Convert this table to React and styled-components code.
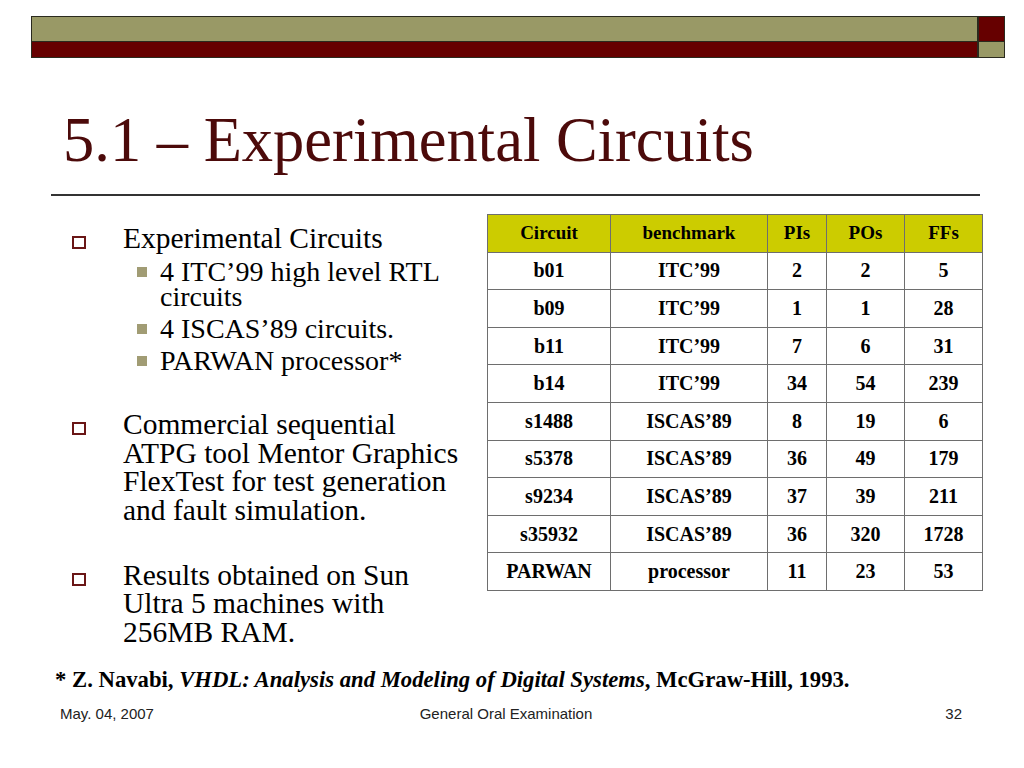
import React from "react";
import styled, { createGlobalStyle } from "styled-components";

const GlobalStyle = createGlobalStyle`
  html, body {
    margin: 0;
    padding: 0;
    background: #ffffff;
  }
`;

const colors = {
  olive: "#999966",
  maroon: "#660000",
  title: "#4c0a0a",
  edge: "#2a2a1e",
  header: "#cccc00",
  grid: "#6e6e6e"
};

const serif = `"Liberation Serif", "Times New Roman", serif`;
const sans = `"Liberation Sans", Arial, sans-serif`;

const circuits = [
  ["b01", "ITC’99", "2", "2", "5"],
  ["b09", "ITC’99", "1", "1", "28"],
  ["b11", "ITC’99", "7", "6", "31"],
  ["b14", "ITC’99", "34", "54", "239"],
  ["s1488", "ISCAS’89", "8", "19", "6"],
  ["s5378", "ISCAS’89", "36", "49", "179"],
  ["s9234", "ISCAS’89", "37", "39", "211"],
  ["s35932", "ISCAS’89", "36", "320", "1728"],
  ["PARWAN", "processor", "11", "23", "53"]
];

const App = () => (
  <>
    <GlobalStyle />
    <Slide>
      <Banner>
        <BannerBar>
          <Strip tone={colors.olive} h={26} />
          <Strip tone={colors.maroon} h={16} />
        </BannerBar>
        <BannerCap>
          <Strip tone={colors.maroon} h={26} />
          <Strip tone={colors.olive} h={16} />
        </BannerCap>
      </Banner>

      <Title>5.1 – Experimental Circuits</Title>
      <Rule />

      <Body>
        <Points>
          <Point>
            <HollowBullet />
            <div>
              Experimental Circuits
              <SubPoints>
                <SubPoint>
                  <FilledBullet />
                  <span>4 ITC’99 high level RTL circuits</span>
                </SubPoint>
                <SubPoint>
                  <FilledBullet />
                  <span>4 ISCAS’89 circuits.</span>
                </SubPoint>
                <SubPoint>
                  <FilledBullet />
                  <span>PARWAN processor*</span>
                </SubPoint>
              </SubPoints>
            </div>
          </Point>
          <Point spaced>
            <HollowBullet />
            <span>
              Commercial sequential ATPG tool Mentor Graphics FlexTest for
              test generation and fault simulation.
            </span>
          </Point>
          <Point spaced>
            <HollowBullet />
            <span>Results obtained on Sun Ultra 5 machines with 256MB RAM.</span>
          </Point>
        </Points>

        <Table>
          <colgroup>
            <col style={{ width: 123 }} />
            <col style={{ width: 157 }} />
            <col style={{ width: 59 }} />
            <col style={{ width: 78 }} />
            <col style={{ width: 78 }} />
          </colgroup>
          <thead>
            <tr>
              <HeadCell>Circuit</HeadCell>
              <HeadCell>benchmark</HeadCell>
              <HeadCell>PIs</HeadCell>
              <HeadCell>POs</HeadCell>
              <HeadCell>FFs</HeadCell>
            </tr>
          </thead>
          <tbody>
            {circuits.map(row => (
              <tr key={row[0]}>
                {row.map((value, i) => (
                  <Cell key={i}>{value}</Cell>
                ))}
              </tr>
            ))}
          </tbody>
        </Table>
      </Body>

      <Footnote>
        * Z. Navabi, <em>VHDL: Analysis and Modeling of Digital Systems</em>,
        McGraw-Hill, 1993.
      </Footnote>

      <Footer>
        <span>May. 04, 2007</span>
        <FooterCenter>General Oral Examination</FooterCenter>
        <FooterRight>32</FooterRight>
      </Footer>
    </Slide>
  </>
);

const Slide = styled.div`
  width: 1024px;
  height: 768px;
  overflow: hidden;
  background: #ffffff;
  display: flex;
  flex-direction: column;
`;

// top decoration
const Banner = styled.div`
  display: flex;
  margin: 16px 19px 0 31px;
  height: 42px;
`;

const BannerBar = styled.div`
  flex: 1;
  display: flex;
  flex-direction: column;
`;

const BannerCap = styled.div`
  width: 27px;
  display: flex;
  flex-direction: column;
`;

const Strip = styled.div`
  height: ${({ h }) => h}px;
  box-sizing: border-box;
  background: ${({ tone }) => tone};
  border: 1px solid ${colors.edge};
  & + & {
    border-top: none;
  }
`;

const Title = styled.h1`
  margin: 51px 0 0 63px;
  font-family: ${serif};
  font-weight: normal;
  font-size: 62.5px;
  line-height: 62px;
  color: ${colors.title};
  white-space: nowrap;
`;

const Rule = styled.hr`
  margin: 23px 44px 0 51px;
  height: 2px;
  border: none;
  background: #333333;
`;

const Body = styled.div`
  display: flex;
  margin: 18px 0 0 51px;
  gap: 23px;
  align-items: flex-start;
`;

const Points = styled.div`
  width: 413px;
  padding-top: 10px;
  font-family: ${serif};
  font-size: 29.5px;
  line-height: 28.4px;
  color: #000000;
`;

const Point = styled.div`
  display: grid;
  grid-template-columns: 72px 1fr;
  margin-top: ${({ spaced }) => (spaced ? "37px" : "0")};
`;

const HollowBullet = styled.span`
  width: 14px;
  height: 13px;
  box-sizing: border-box;
  margin: 12px 0 0 21px;
  border: 2px solid #6a1616;
  background: #ffffff;
`;

const SubPoints = styled.div`
  margin-left: -72px;
  padding-left: 72px;
  margin-top: 3px;
`;

const SubPoint = styled.div`
  display: grid;
  grid-template-columns: 37px 1fr;
  margin-top: 7px;
  font-size: 28px;
  line-height: 25px;
`;

const FilledBullet = styled.span`
  width: 10px;
  height: 10px;
  margin: 8px 0 0 14px;
  background: #a19c74;
`;

const Table = styled.table`
  width: 495px;
  border-collapse: collapse;
  table-layout: fixed;
  font-family: ${serif};
  font-weight: bold;
  color: #000000;
  border: 1.5px solid ${colors.grid};
`;

const Cell = styled.td`
  height: 37.6px;
  box-sizing: border-box;
  padding: 0;
  text-align: center;
  vertical-align: middle;
  font-size: 20px;
  border: 1.5px solid ${colors.grid};
`;

const HeadCell = styled(Cell).attrs({ as: "th" })`
  background: ${colors.header};
  font-size: 19px;
`;

const Footnote = styled.p`
  margin: 21px 0 0 55px;
  font-family: ${serif};
  font-weight: bold;
  font-size: 22.7px;
  line-height: 26px;
  color: #000000;
  white-space: nowrap;

  em {
    font-style: italic;
  }
`;

const Footer = styled.div`
  display: grid;
  grid-template-columns: 1fr auto 1fr;
  margin-top: 12px;
  padding: 0 62px 0 60px;
  font-family: ${sans};
  font-size: 15px;
  line-height: 18px;
  color: #222222;
`;

const FooterCenter = styled.span`
  text-align: center;
  margin-right: 10px;
`;

const FooterRight = styled.span`
  text-align: right;
`;

export default App;
